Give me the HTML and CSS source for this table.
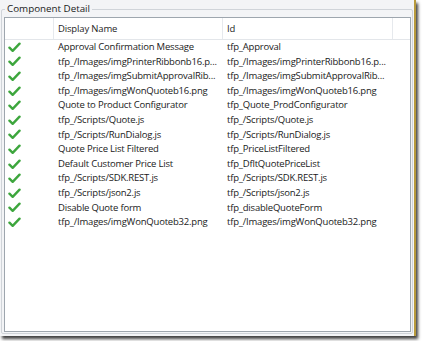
FILE: index.html
```html
<!DOCTYPE html>
<html>
<head>
<meta charset="utf-8">
<link rel="stylesheet" href="styles.css">
</head>
<body>
<div class="window">
  <div class="group">
    <div class="legend">Component Detail</div>
    <div class="list">
      <div class="header">
        <div class="hcell"></div>
        <div class="hcell">Display Name</div>
        <div class="hcell">Id</div>
        <div class="hcell last"></div>
      </div>
      <div class="rows">
        <div class="row"><span class="chk"><svg viewBox="0 0 14 12" width="13" height="11"><path d="M1.5 6.2 L5 9.6 L12.5 1.8" /></svg></span><span class="c">Approval Confirmation Message</span><span class="c">tfp_Approval</span></div>
        <div class="row"><span class="chk"><svg viewBox="0 0 14 12" width="13" height="11"><path d="M1.5 6.2 L5 9.6 L12.5 1.8" /></svg></span><span class="c">tfp_/Images/imgPrinterRibbonb16.p...</span><span class="c">tfp_/Images/imgPrinterRibbonb16.p...</span></div>
        <div class="row"><span class="chk"><svg viewBox="0 0 14 12" width="13" height="11"><path d="M1.5 6.2 L5 9.6 L12.5 1.8" /></svg></span><span class="c">tfp_/Images/imgSubmitApprovalRib...</span><span class="c">tfp_/Images/imgSubmitApprovalRib...</span></div>
        <div class="row"><span class="chk"><svg viewBox="0 0 14 12" width="13" height="11"><path d="M1.5 6.2 L5 9.6 L12.5 1.8" /></svg></span><span class="c">tfp_/Images/imgWonQuoteb16.png</span><span class="c">tfp_/Images/imgWonQuoteb16.png</span></div>
        <div class="row"><span class="chk"><svg viewBox="0 0 14 12" width="13" height="11"><path d="M1.5 6.2 L5 9.6 L12.5 1.8" /></svg></span><span class="c">Quote to Product Configurator</span><span class="c">tfp_Quote_ProdConfigurator</span></div>
        <div class="row"><span class="chk"><svg viewBox="0 0 14 12" width="13" height="11"><path d="M1.5 6.2 L5 9.6 L12.5 1.8" /></svg></span><span class="c">tfp_/Scripts/Quote.js</span><span class="c">tfp_/Scripts/Quote.js</span></div>
        <div class="row"><span class="chk"><svg viewBox="0 0 14 12" width="13" height="11"><path d="M1.5 6.2 L5 9.6 L12.5 1.8" /></svg></span><span class="c">tfp_/Scripts/RunDialog.js</span><span class="c">tfp_/Scripts/RunDialog.js</span></div>
        <div class="row"><span class="chk"><svg viewBox="0 0 14 12" width="13" height="11"><path d="M1.5 6.2 L5 9.6 L12.5 1.8" /></svg></span><span class="c">Quote Price List Filtered</span><span class="c">tfp_PriceListFiltered</span></div>
        <div class="row"><span class="chk"><svg viewBox="0 0 14 12" width="13" height="11"><path d="M1.5 6.2 L5 9.6 L12.5 1.8" /></svg></span><span class="c">Default Customer Price List</span><span class="c">tfp_DfltQuotePriceList</span></div>
        <div class="row"><span class="chk"><svg viewBox="0 0 14 12" width="13" height="11"><path d="M1.5 6.2 L5 9.6 L12.5 1.8" /></svg></span><span class="c">tfp_/Scripts/SDK.REST.js</span><span class="c">tfp_/Scripts/SDK.REST.js</span></div>
        <div class="row"><span class="chk"><svg viewBox="0 0 14 12" width="13" height="11"><path d="M1.5 6.2 L5 9.6 L12.5 1.8" /></svg></span><span class="c">tfp_/Scripts/json2.js</span><span class="c">tfp_/Scripts/json2.js</span></div>
        <div class="row"><span class="chk"><svg viewBox="0 0 14 12" width="13" height="11"><path d="M1.5 6.2 L5 9.6 L12.5 1.8" /></svg></span><span class="c">Disable Quote form</span><span class="c">tfp_disableQuoteForm</span></div>
        <div class="row"><span class="chk"><svg viewBox="0 0 14 12" width="13" height="11"><path d="M1.5 6.2 L5 9.6 L12.5 1.8" /></svg></span><span class="c">tfp_/Images/imgWonQuoteb32.png</span><span class="c">tfp_/Images/imgWonQuoteb32.png</span></div>
      </div>
    </div>
  </div>
</div>
</body>
</html>
```
FILE: styles.css
```css
html, body {
  margin: 0;
  padding: 0;
  background: #ffffff;
}
body {
  width: 422px;
  height: 341px;
  overflow: hidden;
  font-family: "Open Sans", "Noto Sans", sans-serif;
  font-size: 9.5px;
  color: #1a1a1a;
}
.window {
  width: 416px;
  height: 336px;
  box-sizing: border-box;
  background: #f3f4f6;
  border-right: 2px solid #b89a3c;
  box-shadow: 2px 3px 3px rgba(0, 0, 0, 0.75);
  padding: 9px 1px 2px 1px;
}
.group {
  position: relative;
  height: 100%;
  box-sizing: border-box;
  border: 1px solid #d0d4d9;
  border-radius: 2px;
  padding: 7px 1px 1px 2px;
}
.legend {
  position: absolute;
  top: -8px;
  left: 3px;
  padding: 0 2px;
  background: #f3f4f6;
  line-height: 14px;
  font-size: 9.8px;
  color: #1a1a1a;
}
.list {
  height: 100%;
  box-sizing: border-box;
  background: #ffffff;
  border: 1px solid #9ea6ae;
}
.header {
  display: grid;
  grid-template-columns: 49px 169px 170px 1fr;
  height: 21px;
  border-bottom: 1px solid #e3e6ea;
}
.hcell {
  border-right: 1px solid #e6e9ed;
  padding-left: 4px;
  line-height: 21px;
  letter-spacing: -0.15px;
  color: #1e1e1e;
}
.hcell.last {
  border-right: none;
}
.row {
  display: grid;
  grid-template-columns: 49px 169px 170px;
  height: 14.6px;
  line-height: 14.6px;
  white-space: nowrap;
  letter-spacing: -0.2px;
}
.c {
  padding-left: 4px;
  overflow: hidden;
}
.chk {
  display: flex;
  align-items: center;
  padding-left: 3px;
}
.chk svg {
  display: block;
}
.chk path {
  fill: none;
  stroke: #3da63d;
  stroke-width: 2.6;
  stroke-linecap: round;
  stroke-linejoin: round;
}
```
